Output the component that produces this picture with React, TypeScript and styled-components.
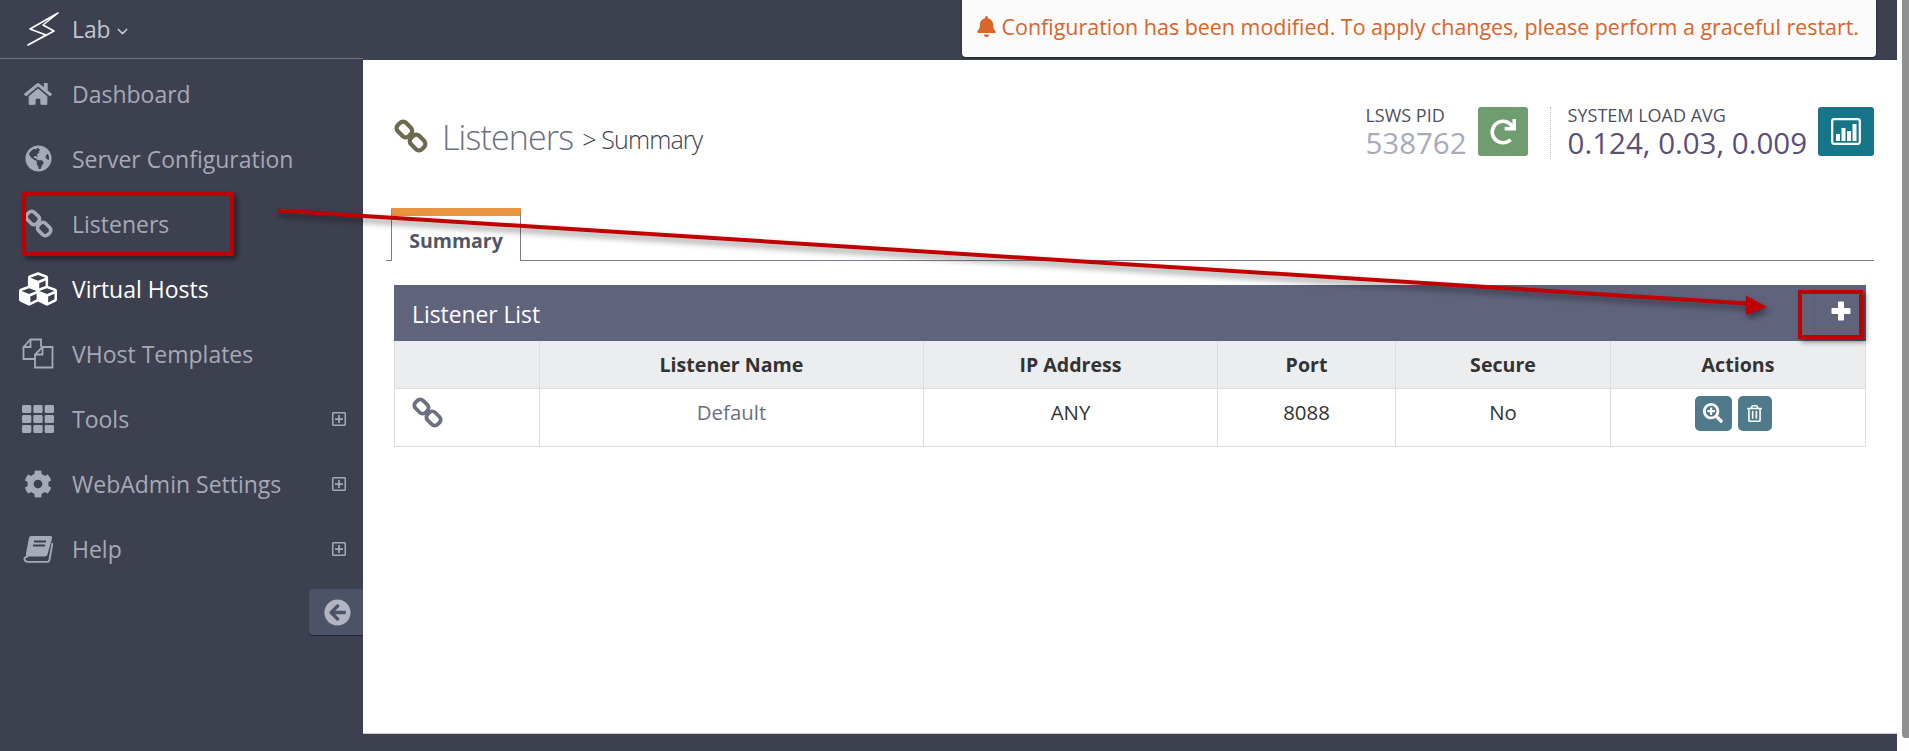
import React from 'react';
import styled, { createGlobalStyle } from 'styled-components';
import { ChevronDown } from 'lucide-react';
import {
  FaArrowCircleLeft,
  FaBell,
  FaCog,
  FaCubes,
  FaGlobeAmericas,
  FaHome,
  FaRedo,
  FaRegPlusSquare,
  FaRegTrashAlt,
  FaSearchPlus,
  FaTh,
} from 'react-icons/fa';

const GlobalStyle = createGlobalStyle`
  html, body {
    margin: 0;
    padding: 0;
    background: #fff;
    overflow: hidden;
  }
  body {
    font-family: "Open Sans", "Noto Sans", sans-serif;
  }
`;

const Shell = styled.div`
  position: relative;
  display: flex;
  width: 1909px;
  height: 751px;
  overflow: hidden;
`;

const Page = styled.div`
  display: flex;
  flex-direction: column;
  width: 1897px;
  height: 751px;
  background: #3d404f;
`;

const ScrollTrack = styled.div`
  display: flex;
  justify-content: flex-end;
  width: 12px;
  height: 751px;
  background: #fdfdfd;
`;

const ScrollThumb = styled.div`
  width: 7px;
  height: 738px;
  background: #8f8f8f;
  border-radius: 0 0 0 4px;
`;

const TopBar = styled.header`
  display: flex;
  justify-content: space-between;
  align-items: flex-start;
  height: 60px;
  flex: none;
`;

const Brand = styled.div`
  display: flex;
  align-items: center;
  height: 59px;
  width: 363px;
  padding-left: 26px;
  box-sizing: border-box;
  border-bottom: 1px solid #70737f;
  color: #c3c6d0;
  font-size: 22.8px;
`;

const BrandName = styled.span`
  margin-left: 10px;
`;

const Notice = styled.div`
  display: flex;
  align-items: center;
  gap: 5px;
  height: 57px;
  margin-right: 21px;
  padding: 0 17px 5px 14px;
  box-sizing: border-box;
  background: #fbfbfb;
  border-radius: 0 0 4px 4px;
  box-shadow: 0 1px 2px rgba(0, 0, 0, 0.5);
  color: #d9652b;
  font-size: 21.45px;
  white-space: nowrap;
`;

const Body = styled.div`
  display: flex;
  height: 674px;
  flex: none;
`;

const Sidebar = styled.nav`
  display: flex;
  flex-direction: column;
  width: 363px;
  flex: none;
  padding-top: 1px;
`;

const NavItem = styled.div<{ $active?: boolean }>`
  display: flex;
  align-items: center;
  height: 65px;
  padding-right: 16px;
  color: ${(p) => (p.$active ? '#ffffff' : '#a6a9b6')};
  font-size: 23px;
`;

const NavIcon = styled.span`
  display: flex;
  justify-content: center;
  align-items: center;
  width: 72px;
  flex: none;
  padding-left: 4px;
  box-sizing: border-box;
`;

const NavLabel = styled.span`
  flex: 1;
`;

const CollapseRow = styled.div`
  display: flex;
  justify-content: flex-end;
  margin-top: 8px;
`;

const CollapseButton = styled.div`
  display: flex;
  justify-content: center;
  align-items: center;
  width: 54px;
  height: 46px;
  padding-left: 2px;
  box-sizing: border-box;
  background: #4c5366;
  border-radius: 4px 0 0 4px;
  box-shadow: 0 1px 1px rgba(0, 0, 0, 0.4);
  color: #b2b5c1;
`;

const Main = styled.main`
  flex: 1;
  padding: 0 31px;
  background: #fff;
  border-bottom: 1px solid #c9cbd1;
`;

const PageHead = styled.div`
  display: flex;
  justify-content: space-between;
  align-items: flex-start;
  height: 148px;
  padding-top: 47px;
  box-sizing: border-box;
`;

const TitleBlock = styled.div`
  display: flex;
  align-items: center;
  height: 49px;
  margin-top: 4px;
`;

const Title = styled.h1`
  margin: 0 0 0 14px;
  padding-top: 2px;
  color: #6c7080;
  font-size: 34px;
  font-weight: 300;
  letter-spacing: -0.85px;
`;

const SubTitle = styled.span`
  margin-left: 9px;
  padding-top: 7px;
  color: #3d404f;
  font-size: 25px;
  font-weight: 300;
  letter-spacing: -0.85px;
`;

const Stats = styled.div`
  display: flex;
  margin-right: -8px;
`;

const Stat = styled.div`
  display: flex;
  gap: 11px;
`;

const StatText = styled.div`
  display: flex;
  flex-direction: column;
  height: 49px;
  margin-top: -1px;
  white-space: nowrap;
`;

const StatLabel = styled.div`
  color: #4d505e;
  font-size: 18px;
  line-height: 18px;
`;

const StatValue = styled.div<{ $tone: string }>`
  color: ${(p) => p.$tone};
  font-size: 29.5px;
  line-height: 38px;
`;

const StatButton = styled.div<{ $bg: string; $w: number }>`
  display: flex;
  justify-content: center;
  align-items: center;
  width: ${(p) => p.$w}px;
  height: 49px;
  background: ${(p) => p.$bg};
  border-radius: 3px;
  color: #fff;
`;

const StatDivider = styled.div`
  width: 0;
  height: 52px;
  margin: 0 17px 0 22px;
  border-left: 1px dotted #bbb;
`;

const TabBar = styled.div`
  display: flex;
  height: 52px;
  margin: 0 -8px 24px -8px;
  padding-left: 5px;
  box-sizing: content-box;
  border-bottom: 1px solid #7b7e8c;
`;

const Tab = styled.div`
  display: flex;
  justify-content: center;
  align-items: center;
  width: 130px;
  height: 53px;
  padding-top: 4px;
  box-sizing: border-box;
  background: #fff;
  border-top: 8px solid #e9943e;
  border-left: 1px solid #7b7e8c;
  border-right: 1px solid #7b7e8c;
  color: #50556a;
  font-size: 19.5px;
  font-weight: 700;
  line-height: 1;
`;

const PanelHead = styled.div`
  display: flex;
  justify-content: space-between;
  align-items: center;
  height: 56px;
  padding-left: 18px;
  background: #5f637c;
  color: #fff;
  font-size: 22.8px;
`;

const PanelTitle = styled.span`
  padding-top: 2px;
`;

const PanelAction = styled.div`
  display: flex;
  align-items: center;
  justify-content: center;
  width: 51px;
  height: 48px;
  margin-bottom: 5px;
  border-left: 1px solid #565a72;
`;

const Grid = styled.table`
  width: 1471px;
  table-layout: fixed;
  border-collapse: collapse;
`;

const HeadCell = styled.th`
  height: 47px;
  padding: 0;
  box-sizing: border-box;
  background: #ecedef;
  border: 1px solid #dcdde0;
  border-top: 0;
  color: #333;
  font-size: 19.6px;
  font-weight: 700;
`;

const Cell = styled.td<{ $muted?: boolean }>`
  height: 58px;
  padding: 0 0 10px;
  box-sizing: border-box;
  border: 1px solid #dcdde0;
  color: ${(p) => (p.$muted ? '#6c7080' : '#333')};
  font-size: 20.4px;
  text-align: center;
`;

const IconCell = styled.td`
  height: 58px;
  padding: 0 0 4px 17px;
  box-sizing: border-box;
  border: 1px solid #dcdde0;
`;

const ActionRow = styled.div`
  display: flex;
  justify-content: center;
  gap: 6px;
  padding-right: 10px;
  padding-top: 2px;
`;

const ActionButton = styled.div<{ $w: number }>`
  display: flex;
  justify-content: center;
  align-items: center;
  width: ${(p) => p.$w}px;
  height: 35px;
  background: #4f7a8c;
  border-radius: 5px;
  color: #fff;
`;

const Callout = styled.div<{ $x: number; $y: number; $w: number; $h: number }>`
  position: absolute;
  left: ${(p) => p.$x}px;
  top: ${(p) => p.$y}px;
  width: ${(p) => p.$w}px;
  height: ${(p) => p.$h}px;
  box-sizing: border-box;
  border: 4px solid #c00000;
  box-shadow: 3px 3px 5px rgba(0, 0, 0, 0.45);
  pointer-events: none;
`;

const ArrowLayer = styled.svg`
  position: absolute;
  left: 0;
  top: 0;
  width: 1909px;
  height: 751px;
  pointer-events: none;
  filter: drop-shadow(2px 4px 3px rgba(0, 0, 0, 0.45));
`;

// chain icon, the font awesome one leans the other way
const ChainIcon = ({ size, color }: { size: number; color: string }) => (
  <svg width={size} height={size} viewBox="0 0 34 34" fill="none" stroke={color} strokeWidth="4.2">
    <rect x="2.6" y="4.6" width="15.6" height="11.8" rx="4.5" transform="rotate(45 10.4 10.5)" />
    <rect x="15.8" y="17.6" width="15.6" height="11.8" rx="4.5" transform="rotate(45 23.6 23.5)" />
  </svg>
);

const FilesIcon = () => (
  <svg width="32" height="31" viewBox="0 0 32 31" fill="none" stroke="#a6a9b6" strokeWidth="1.8">
    <path d="M14 21H1.5V9L8.5 1.5H19V9" />
    <path d="M8.5 1.5V9H1.5" />
    <path d="M13 29.5V16.5L20.5 9H30.5V29.5Z" />
    <path d="M20.5 9V16.5H13" />
  </svg>
);

const BookIcon = () => (
  <svg width="30" height="28" viewBox="0 0 30 28">
    <path
      d="M8 1H27.5Q29.5 1 29 3.5L24.5 19.5Q24 21.5 21.5 21.5H5Q2.5 21.5 3 18L6 3Q6.5 1 8 1Z"
      fill="#a6a9b6"
    />
    <path d="M11 6.5H23M10 10.5H22" stroke="#3d404f" strokeWidth="2" />
    <path
      d="M5 21.5Q1 22 1.5 24.5Q2 26.8 5 26.8H24.5Q26 26.8 26.4 25L29.5 8"
      fill="none"
      stroke="#a6a9b6"
      strokeWidth="1.8"
    />
  </svg>
);

const LogoBolt = () => (
  <svg width="36" height="38" viewBox="0 0 36 38" fill="none" stroke="#fff" strokeWidth="1.6">
    <path d="M32 3 4 19 20 25 2 35 28 21 17 15Z" strokeLinejoin="round" />
  </svg>
);

const ChartBoxIcon = () => (
  <svg width="30" height="27" viewBox="0 0 30 27" fill="none">
    <rect x="1.2" y="1.2" width="27.6" height="24.6" rx="2" stroke="#fff" strokeWidth="2.2" />
    <g fill="#fff">
      <rect x="5" y="16" width="4" height="7" />
      <rect x="10.5" y="10" width="4" height="13" />
      <rect x="16" y="13" width="4" height="10" />
      <rect x="21.5" y="6" width="4" height="17" />
    </g>
  </svg>
);

const PlusIcon = () => (
  <svg width="20" height="20" viewBox="0 0 20 20" fill="#fff">
    <rect x="7" y="0.5" width="6" height="19" rx="1" />
    <rect x="0.5" y="7" width="19" height="6" rx="1" />
  </svg>
);

const navItems = [
  { label: 'Dashboard', icon: <FaHome size={28} /> },
  { label: 'Server Configuration', icon: <FaGlobeAmericas size={27} /> },
  { label: 'Listeners', icon: <ChainIcon size={29} color="#a6a9b6" /> },
  { label: 'Virtual Hosts', icon: <FaCubes size={38} />, active: true },
  { label: 'VHost Templates', icon: <FilesIcon /> },
  { label: 'Tools', icon: <FaTh size={32} />, more: true },
  { label: 'WebAdmin Settings', icon: <FaCog size={28} />, more: true },
  { label: 'Help', icon: <BookIcon />, more: true },
];

const columns = [145, 384, 294, 178, 215, 255];

const App = () => {
  return (
    <Shell>
      <GlobalStyle />
      <Page>
        <TopBar>
          <Brand>
            <LogoBolt />
            <BrandName>Lab</BrandName>
            <ChevronDown size={17} strokeWidth={2} style={{ marginLeft: 3, marginTop: 4 }} />
          </Brand>
          <Notice>
            <FaBell size={21} />
            Configuration has been modified. To apply changes, please perform a graceful restart.
          </Notice>
        </TopBar>
        <Body>
          <Sidebar>
            {navItems.map((item) => (
              <NavItem key={item.label} $active={item.active}>
                <NavIcon>{item.icon}</NavIcon>
                <NavLabel>{item.label}</NavLabel>
                {item.more && <FaRegPlusSquare size={16} />}
              </NavItem>
            ))}
            <CollapseRow>
              <CollapseButton>
                <FaArrowCircleLeft size={27} />
              </CollapseButton>
            </CollapseRow>
          </Sidebar>
          <Main>
            <PageHead>
              <TitleBlock>
                <ChainIcon size={34} color="#6b6a4e" />
                <Title>Listeners</Title>
                <SubTitle>&gt; Summary</SubTitle>
              </TitleBlock>
              <Stats>
                <Stat>
                  <StatText>
                    <StatLabel>LSWS PID</StatLabel>
                    <StatValue $tone="#a8abb8">538762</StatValue>
                  </StatText>
                  <StatButton $bg="#6f9d70" $w={50}>
                    <FaRedo size={26} />
                  </StatButton>
                </Stat>
                <StatDivider />
                <Stat>
                  <StatText>
                    <StatLabel>SYSTEM LOAD AVG</StatLabel>
                    <StatValue $tone="#5b4f78">0.124, 0.03, 0.009</StatValue>
                  </StatText>
                  <StatButton $bg="#17758a" $w={56}>
                    <ChartBoxIcon />
                  </StatButton>
                </Stat>
              </Stats>
            </PageHead>
            <TabBar>
              <Tab>Summary</Tab>
            </TabBar>
            <PanelHead>
              <PanelTitle>Listener List</PanelTitle>
              <PanelAction>
                <PlusIcon />
              </PanelAction>
            </PanelHead>
            <Grid>
              <colgroup>
                {columns.map((w, i) => (
                  <col key={i} width={w} />
                ))}
              </colgroup>
              <thead>
                <tr>
                  <HeadCell />
                  <HeadCell>Listener Name</HeadCell>
                  <HeadCell>IP Address</HeadCell>
                  <HeadCell>Port</HeadCell>
                  <HeadCell>Secure</HeadCell>
                  <HeadCell>Actions</HeadCell>
                </tr>
              </thead>
              <tbody>
                <tr>
                  <IconCell>
                    <ChainIcon size={31} color="#6c7080" />
                  </IconCell>
                  <Cell $muted>Default</Cell>
                  <Cell>ANY</Cell>
                  <Cell>8088</Cell>
                  <Cell>No</Cell>
                  <Cell>
                    <ActionRow>
                      <ActionButton $w={37}>
                        <FaSearchPlus size={20} />
                      </ActionButton>
                      <ActionButton $w={34}>
                        <FaRegTrashAlt size={17} />
                      </ActionButton>
                    </ActionRow>
                  </Cell>
                </tr>
              </tbody>
            </Grid>
          </Main>
        </Body>
      </Page>
      <ScrollTrack>
        <ScrollThumb />
      </ScrollTrack>
      <Callout $x={22} $y={192} $w={212} $h={64} />
      <Callout $x={1798} $y={290} $w={65} $h={49} />
      <ArrowLayer viewBox="0 0 1909 751">
        <path d="M277 210.5 1747 303.5" stroke="#c00000" strokeWidth="4" fill="none" />
        <path d="M1767 307 1746 295.5 1746 315Z" fill="#c00000" />
      </ArrowLayer>
    </Shell>
  );
};

export default App;
